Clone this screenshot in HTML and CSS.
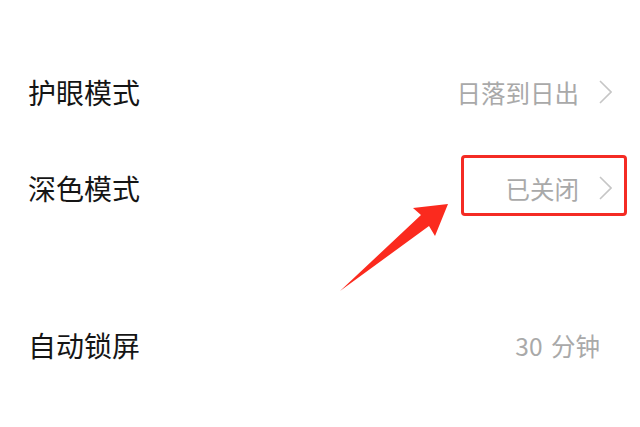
FILE: index.html
```html
<!DOCTYPE html>
<html lang="zh-CN">
<head>
    <meta charset="UTF-8">
    <meta name="viewport" content="width=device-width, initial-scale=1.0">
    <title>显示设置</title>
    <link rel="stylesheet" href="styles.css">
</head>
<body>
    <div class="ajustes">
        <div class="fila">
            <span class="titulo">护眼模式</span>
            <span class="valor">日落到日出
                <svg class="flecha" width="13" height="24" viewBox="0 0 13 24"><polyline points="1,1 12,12 1,23"/></svg>
            </span>
        </div>
        <div class="fila">
            <span class="titulo">深色模式</span>
            <span class="valor">已关闭
                <svg class="flecha" width="13" height="24" viewBox="0 0 13 24"><polyline points="1,1 12,12 1,23"/></svg>
            </span>
            <div class="marca"></div>
        </div>
        <div class="fila fila-separada">
            <span class="titulo">自动锁屏</span>
            <span class="valor sin-flecha">30&nbsp;分钟</span>
        </div>

        <!-- flecha roja de anotación -->
        <svg class="puntero" width="116" height="94" viewBox="0 0 116 94">
            <polygon points="4,91 85,15 77,8 112,4 99,36 93,26"/>
        </svg>
    </div>
</body>
</html>
```

FILE: styles.css
```css
body {
    font-family: "Noto Sans CJK SC", "Noto Sans", sans-serif;
    margin: 0;
    background-color: #fff;
}
.ajustes {
    position: relative;
    width: 640px;
    height: 427px;
    padding-top: 44px;
    box-sizing: border-box;
    overflow: hidden;
}
.fila {
    position: relative;
    display: flex;
    justify-content: space-between;
    align-items: center;
    height: 96px;
    padding: 0 28px;
}
.fila-separada {
    margin-top: 61px;
}
.titulo {
    font-size: 28px;
    color: #151515;
}
.valor {
    display: flex;
    align-items: center;
    gap: 20px;
    font-size: 24.5px;
    color: #a9a9a9;
}
.sin-flecha {
    margin-right: 12px;
    word-spacing: 3px;
}
.flecha polyline {
    fill: none;
    stroke: #c6c6c6;
    stroke-width: 1.6;
}
.marca {
    position: absolute;
    top: 15px;
    right: 13px;
    width: 166px;
    height: 61px;
    box-sizing: border-box;
    border: 3px solid #f42b24;
    border-radius: 4px;
}
.puntero {
    position: absolute;
    left: 336px;
    top: 200px;
}
.puntero polygon {
    fill: #fb2a1e;
}
```
